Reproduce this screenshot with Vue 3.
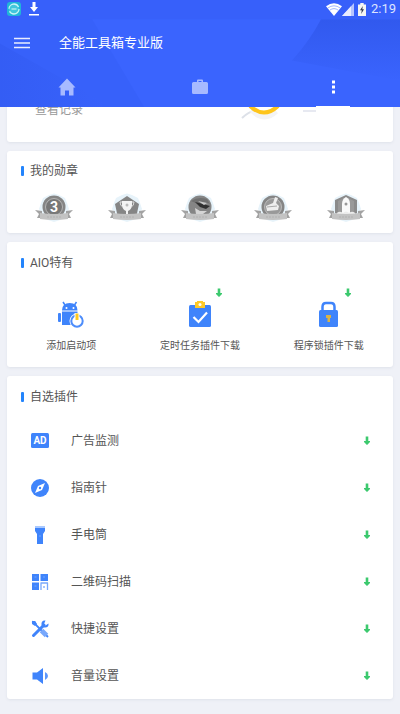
<script setup>
const medals = [
  { kind: 'three', name: '三级勋章' },
  { kind: 'cup', name: '奖杯勋章' },
  { kind: 'wing', name: '飞行勋章' },
  { kind: 'clean', name: '清理勋章' },
  { kind: 'rocket', name: '火箭勋章' },
]
const tools = [
  { icon: 'android', label: '添加启动项', download: false },
  { icon: 'task', label: '定时任务插件下载', download: true },
  { icon: 'lock', label: '程序锁插件下载', download: true },
]
const plugins = [
  { icon: 'ad', label: '广告监测' },
  { icon: 'compass', label: '指南针' },
  { icon: 'torch', label: '手电筒' },
  { icon: 'qr', label: '二维码扫描' },
  { icon: 'tools', label: '快捷设置' },
  { icon: 'volume', label: '音量设置' },
]
</script>

<template>
  <div class="app">
    <header class="header">
      <svg class="facets" viewBox="0 0 400 106" preserveAspectRatio="none" aria-hidden="true">
        <defs>
          <linearGradient id="facetRight" x1="0" y1="0" x2="0" y2="1">
            <stop offset="0" stop-color="#3159ee" />
            <stop offset="1" stop-color="#3a64fe" />
          </linearGradient>
          <linearGradient id="facetLeft" x1="0" y1="0" x2="1" y2="0">
            <stop offset="0" stop-color="#3159ef" />
            <stop offset="1" stop-color="#3862fb" />
          </linearGradient>
        </defs>
        <path d="M0 19H92L144 106H0Z" fill="#3761fa" />
        <path d="M0 43L102 100V106H0Z" fill="url(#facetLeft)" opacity=".5" />
        <path d="M321 19H400V80L292 60Q310 40 321 19Z" fill="url(#facetRight)" />
        <path d="M0 0H400V19H0Z" fill="#3760fa" />
      </svg>

      <div class="status">
        <svg class="status-app" viewBox="0 0 14 14" aria-hidden="true">
          <rect width="14" height="14" rx="3" fill="#20b6d8" />
          <circle cx="7" cy="7" r="5" fill="#42c6dc" stroke="#c9f5f5" stroke-width="1.3" stroke-dasharray="13 2.5" />
          <path d="M4.5 7H9.5" stroke="#b3edf0" stroke-width="1.4" />
        </svg>
        <svg class="status-down" viewBox="0 0 12 14" aria-hidden="true">
          <path d="M4.5 0H7.5V5H10L6 10L2 5H4.5ZM1 12H11V13.5H1Z" fill="#fff" />
        </svg>
        <span class="spacer"></span>
        <svg class="status-wifi" viewBox="0 0 16 13" aria-hidden="true">
          <path d="M0 3.3Q8 -2.8 16 3.3L8 13Z" fill="#fff" />
          <path d="M1.8 5Q8 .6 14.2 5M3.7 7.2Q8 4 12.3 7.2" fill="none" stroke="#7996ff" stroke-width=".7" />
        </svg>
        <svg class="status-signal" viewBox="0 0 12 13" aria-hidden="true">
          <path d="M0 13L12 0V13Z" fill="#b7c5ff" />
          <path d="M0 13L9 3.3V13Z" fill="#e9edff" />
        </svg>
        <svg class="status-battery" viewBox="0 0 8 13" aria-hidden="true">
          <path d="M0 1.5H2.3V0H5.7V1.5H8V13H0Z" fill="#f5f5f2" />
          <path d="M4.8 3L2 7.3H3.8L3.2 11L6 6.3H4.3Z" fill="#33394f" />
        </svg>
        <span class="clock">2:19</span>
      </div>

      <div class="bar">
        <button class="menu" type="button" aria-label="菜单">
          <svg viewBox="0 0 16 12" aria-hidden="true"><path d="M0 1.5H16M0 6H16M0 10.5H16" stroke="#e9eeff" stroke-width="1.5" /></svg>
        </button>
        <h1>全能工具箱专业版</h1>
      </div>

      <nav class="tabs">
        <button type="button" aria-label="主页">
          <svg viewBox="0 0 18 18" aria-hidden="true"><path d="M9 .5L17.5 9.5H15.500V17.500H11V12.500H7V17.500H2.500V9.500H.5Z" fill="#a7baff" /></svg>
        </button>
        <button type="button" aria-label="工具">
          <svg viewBox="0 0 18 18" aria-hidden="true"><path d="M6 4V2.5Q6 1.5 7 1.5H11Q12 1.5 12 2.5V4H15.5Q17 4 17 5.5V14.5Q17 16 15.5 16H2.5Q1 16 1 14.5V5.5Q1 4 2.5 4ZM7.5 4H10.5V3H7.5Z" fill="#a7baff" fill-rule="evenodd" /></svg>
        </button>
        <button class="active" type="button" aria-label="更多">
          <svg viewBox="0 0 18 18" aria-hidden="true"><path d="M8 2.400H11V5.400H8ZM8 7.400H11V10.400H8ZM8 12.400H11V15.400H8Z" fill="#fff" /></svg>
        </button>
      </nav>
    </header>

    <main>
      <section class="card records">
        <a href="#records">查看记录</a>
        <svg viewBox="0 0 80 24" aria-hidden="true">
          <path d="M2 18Q9 11 17 10" fill="none" stroke="#dde1e8" stroke-width="2" />
          <path d="M12 10Q24 22 36 11" fill="none" stroke="#f4f4f5" stroke-width="6" />
          <path d="M10 6Q24 19 38 6" fill="none" stroke="#fec51c" stroke-width="4" />
          <path d="M63 11H76" stroke="#e7e9f1" stroke-width="2" />
        </svg>
      </section>

      <section class="card medals-card">
        <h2>我的勋章</h2>
        <ul class="medals">
          <li v-for="m in medals" :key="m.kind">
            <svg viewBox="0 0 40 30" role="img" :aria-label="m.name">
              <path d="M20 .5L25 2L31 5L33 10L35 16L32 22L26 27L20 29L14 27L8 22L5 16L7 10L9 5L15 2Z" fill="#e7f3fa" />
              <path v-if="m.kind === 'cup'" d="M20 3L32 11L29 25H11L8 11Z" fill="#858585" />
              <path v-else-if="m.kind === 'rocket'" d="M20 2L31 7V20L20 27L9 20V7Z" fill="#8b8b8b" />
              <circle v-else cx="20" cy="14" r="11.5" fill="#858585" />
              <g v-if="m.kind === 'three'">
                <circle cx="20" cy="14" r="8.5" fill="#777" stroke="#b5b5b5" />
                <text x="20" y="18.5" class="medal-number">3</text>
              </g>
              <g v-else-if="m.kind === 'cup'">
                <path d="M15 8H25V13Q24 17 21 18V21H24V23H16V21H19V18Q16 17 15 13Z" fill="#f3f3f3" />
                <path d="M15 9H13Q13 13 16 14M25 9H27Q27 13 24 14" fill="none" stroke="#ddd" />
                <circle cx="20" cy="12" r="1.5" fill="#bbb" />
              </g>
              <g v-else-if="m.kind === 'wing'">
                <path d="M11 8Q18 3 27 6L30 11Q25 8 20 12Z" fill="#707070" />
                <path d="M15 9L23 11L30 13L26 16L20 14Z" fill="#303030" />
                <path d="M18 8L27 10L24 12Z" fill="#c9c9c9" />
                <path d="M15 15L20 18L27 18L23 21H16Z" fill="#d5d5d5" />
              </g>
              <g v-else-if="m.kind === 'clean'">
                <circle cx="20" cy="14" r="8.5" fill="#999" stroke="#bbb" />
                <path d="M20 10L22 4L25 5L23 10L26 13L25 17L14 18L13 13Z" fill="#eee" />
                <path d="M14 14L24 13" stroke="#aaa" />
              </g>
              <g v-else>
                <path d="M12 8L20 4L28 8V20H12Z" fill="#999" />
                <path d="M20 4Q24 6 24 11V20H16V11Q16 6 20 4Z" fill="#fafafa" />
                <circle cx="20" cy="11" r="1.5" fill="#999" />
                <path d="M10 21Q13 17 17 20Q20 17 23 20Q27 17 30 21Z" fill="#ececec" />
              </g>
              <path d="M1 17L8 18V25H3L5 21ZM39 17L32 18V25H37L35 21Z" fill="#a2a2a2" />
              <path d="M6 20Q20 22 34 20V26Q20 28 6 26Z" fill="#c3c3c3" />
              <path d="M13 24H27" stroke="#b1b1b1" stroke-width="1" stroke-dasharray="2 1" />
            </svg>
          </li>
        </ul>
      </section>

      <section class="card special">
        <h2>AIO特有</h2>
        <div class="tool-grid">
          <button v-for="t in tools" :key="t.icon" class="tool" type="button">
            <span class="tool-icon">
              <svg v-if="t.icon === 'android'" viewBox="0 0 28 28" aria-hidden="true">
                <path d="M6 1L8 4M19.500 1L17.500 4" stroke="#3f84fb" stroke-width="1.5" />
                <path d="M5 9.500Q5 2 12.700 2Q20.500 2 20.500 9.500Z" fill="#3f84fb" />
                <path d="M5 10.500H20.500V24H5Z" fill="#3f84fb" />
                <rect x="1" y="12" width="3" height="9" rx="1" fill="#3f84fb" />
                <circle cx="9.500" cy="7" r="1" fill="#fff" /><circle cx="16.500" cy="7" r="1" fill="#fff" />
                <circle cx="20" cy="20" r="7.500" fill="#fff" />
                <circle cx="20" cy="20" r="5.700" fill="none" stroke="#4d8dfb" stroke-width="2" />
                <path d="M20 12V19" stroke="#fff" stroke-width="5" />
                <path d="M20 12.500V19" stroke="#ffc81f" stroke-width="3" />
              </svg>
              <svg v-else-if="t.icon === 'task'" viewBox="0 0 28 28" aria-hidden="true">
                <rect x="3" y="4" width="22" height="22" rx="1.500" fill="#3f84fb" />
                <path d="M9 1H11V0H17V1H19V7H9Z" fill="#ffca28" />
                <circle cx="14" cy="3.500" r="1.500" fill="#fff" />
                <path d="M7.500 16L12.500 21L21 11.500" fill="none" stroke="#fff" stroke-width="2.200" />
              </svg>
              <svg v-else viewBox="0 0 28 28" aria-hidden="true">
                <path d="M7.500 10V6Q7.500 2 11 2H16Q19.500 2 19.500 6V10" fill="none" stroke="#3f84fb" stroke-width="2.500" />
                <rect x="4" y="9" width="19" height="17" rx="1.500" fill="#3f84fb" />
                <path d="M11 14H16V17H15V21H12.500V17H11Z" fill="#d9b349" />
              </svg>
              <svg v-if="t.download" class="arrow badge" viewBox="0 0 6 10" aria-hidden="true"><path d="M1.700 .5H4.300V5H6V6L3 9L0 6V5H1.700Z" fill="#3cc96e" /></svg>
            </span>
            <span class="tool-label">{{ t.label }}</span>
          </button>
        </div>
      </section>

      <section class="card plugins">
        <h2>自选插件</h2>
        <ul class="plugin-list">
          <li v-for="p in plugins" :key="p.icon">
            <button class="plugin" type="button">
              <svg class="plugin-icon" viewBox="0 0 18 18" aria-hidden="true">
                <g v-if="p.icon === 'ad'">
                  <rect y="1" width="18" height="15" rx="1.500" fill="#3f84fb" />
                  <text x="9" y="12" class="ad-text">AD</text>
                </g>
                <g v-else-if="p.icon === 'compass'">
                  <circle cx="9" cy="9" r="9" fill="#3f84fb" />
                  <path d="M14 4L11 11L4 14L7 7Z" fill="#fff" />
                  <circle cx="9" cy="9" r="1.200" fill="#3f84fb" />
                </g>
                <g v-else-if="p.icon === 'torch'">
                  <path d="M4 0H14V2H4Z" fill="#a9c9ff" />
                  <path d="M4 2H14V5L12 8V18H6V8L4 5Z" fill="#3f84fb" />
                  <path d="M9 9V11" stroke="#6ca1fd" stroke-width="1.200" />
                </g>
                <g v-else-if="p.icon === 'qr'">
                  <path d="M1 1H8V8H1ZM9.500 1H17V8H9.500ZM1 9.500H8V17H1Z" fill="#3f84fb" />
                  <path d="M9.500 10H17M10 10V17M13 13V15M16.500 10V17" fill="none" stroke="#78a8fc" stroke-width="1.300" />
                  <path d="M3.500 4H5.500M12 4H14M3.500 13H5.500" stroke="#6fa3fd" />
                </g>
                <g v-else-if="p.icon === 'tools'">
                  <path d="M1 1.500L4 2.500L5 5L15 15L17 17" fill="none" stroke="#3f84fb" stroke-width="1.800" />
                  <path d="M1 1H4L6 4L4 6L1 4Z" fill="#3f84fb" />
                  <path d="M10.500 10.500L15.500 15.500" stroke="#78a8fc" stroke-width="5" />
                  <path d="M2.500 15.500L13 5" stroke="#3f84fb" stroke-width="3" stroke-linecap="round" />
                  <path d="M14.500 .5Q10 0 10.500 5Q11 8 14 7.500Q18 7.500 17.500 3.500L14.500 5.500L13 4Z" fill="#3f84fb" />
                </g>
                <g v-else>
                  <path d="M1.500 5.500H6L12 1V17L6 12.500H1.500Z" fill="#3f84fb" />
                  <path d="M14 5Q17 6.500 17 9Q17 11.500 14 13Z" fill="#5e98fc" />
                </g>
              </svg>
              <span class="plugin-label">{{ p.label }}</span>
              <svg class="arrow" viewBox="0 0 6 10" aria-hidden="true"><path d="M1.700 .5H4.300V5H6V6L3 9L0 6V5H1.700Z" fill="#3cc96e" /></svg>
            </button>
          </li>
        </ul>
      </section>
    </main>
  </div>
</template>

<style>
body { margin: 0; background: #eff1f7; }
</style>

<style scoped>
.app { font-family: Roboto, "Noto Sans CJK SC", sans-serif; color: #555; }
button { border: 0; padding: 0; margin: 0; background: none; font: inherit; color: inherit; cursor: pointer; }
ul { list-style: none; margin: 0; padding: 0; }
svg { display: block; }
h1, h2 { margin: 0; font-weight: 400; }

.header { position: sticky; top: 0; z-index: 2; background: #3a64fe; color: #fff; }
.facets { position: absolute; inset: 0; width: 100%; height: 100%; z-index: -1; }
.status { display: flex; align-items: center; height: 18px; padding: 0 4px 0 7px; }
.status-app { width: 14px; height: 14px; }
.status-down { width: 12px; height: 14px; margin-left: 7px; }
.spacer { flex: 1; }
.status-wifi { width: 16px; height: 13px; }
.status-signal { width: 12px; height: 13px; }
.status-battery { width: 8px; height: 13px; margin: 0 5px 0 4px; }
.clock { font-size: 13px; line-height: 18px; color: #dde4ff; }
.bar { display: flex; align-items: center; height: 50px; padding: 0 14px; gap: 29px; }
.menu svg { width: 16px; height: 12px; }
h1 { font-size: 13px; line-height: 20px; }
.tabs { display: grid; grid-template-columns: repeat(3, 1fr); height: 39px; }
.tabs button { display: flex; justify-content: center; align-items: center; border-bottom: 1px solid transparent; }
.tabs svg { width: 18px; height: 18px; }
.tabs .active { width: 34px; justify-self: center; border-bottom-color: #fff; }

main { display: flex; flex-direction: column; gap: 9px; padding: 0 7px 14px; }
.card { background: #fff; border-radius: 3px; box-shadow: 0 1px 3px #dfe2ea; }
h2 { display: flex; align-items: center; gap: 6px; padding: 0 14px; font-size: 12px; line-height: 20px; }
h2::before { content: ""; width: 3px; height: 10px; border-radius: 1px; background: #2384fc; }

.records { display: flex; justify-content: space-between; align-items: flex-start; margin-top: -12px; padding: 5px 73px 18px 28px; }
.records a { font-size: 12px; line-height: 20px; color: #999; text-decoration: none; }
.records svg { width: 80px; height: 24px; }

.medals-card { padding: 10px 0; }
.medals { display: grid; grid-template-columns: repeat(5, 1fr); padding: 12px 10px 0; }
.medals svg { width: 40px; height: 30px; margin: 0 auto; }
.medal-number { font-size: 14px; font-weight: 700; text-anchor: middle; fill: #fff; }

.special { padding: 11px 0 12px; }
.tool-grid { display: grid; grid-template-columns: repeat(3, 1fr); padding-top: 28px; }
.tool { display: flex; flex-direction: column; align-items: center; gap: 8px; }
.tool-icon { position: relative; }
.tool-icon svg { width: 28px; height: 28px; }
.tool-label { font-size: 10px; line-height: 18px; }
.arrow { width: 6px; height: 10px; flex: none; }
.tool-icon .badge { position: absolute; top: -13px; right: -8px; width: 6px; height: 10px; }

.plugins { padding: 11px 0 0; }
.plugin-list { padding: 10px 0 0; }
.plugin { display: flex; align-items: center; width: 100%; height: 47px; padding: 0 23px 0 24px; text-align: left; }
.plugin-icon { width: 18px; height: 18px; }
.ad-text { font-size: 10px; font-weight: 700; text-anchor: middle; fill: #fff; }
.plugin-label { flex: 1; margin-left: 22px; font-size: 12px; line-height: 20px; }
</style>
